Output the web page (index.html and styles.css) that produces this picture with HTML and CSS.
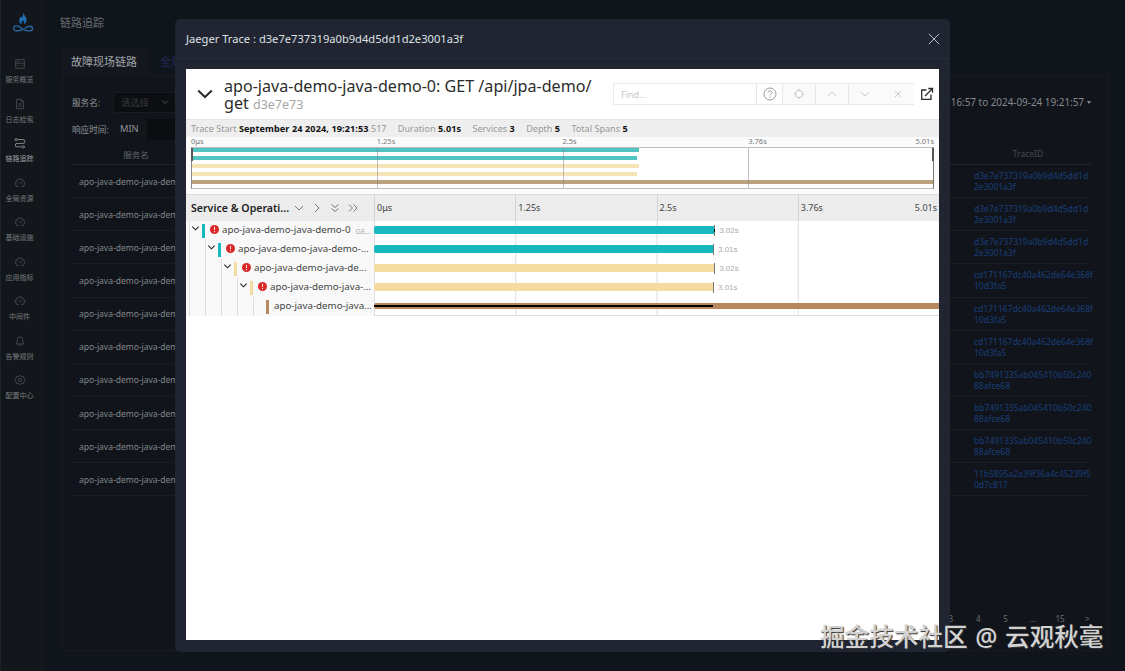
FILE: index.html
```html
<!DOCTYPE html>
<html lang="zh">
  <head>
    <meta charset="UTF-8" />
    <meta name="viewport" content="width=device-width, initial-scale=1.0" />
    <title>链路追踪</title>
    <link rel="stylesheet" href="styles.css">
  </head>
  <body>
    <div class="app">
      <nav class="sidebar">
        <svg class="logo" viewBox="0 0 22 20">
          <path d="M11 .5c.8 2.600 3.600 4.300 3.600 7.500 0 2-1.200 3.600-2.600 4.300.5-1.600 0-2.900-1.100-4-.9 1.100-1.700 2.400-1.100 4C8.200 11.600 7 10 7.200 7.900c.2-1.500 1-2.100 1.300-3.400.6.4.9.9 1 1.500C10.700 4.500 11.300 2.700 11 .5z" fill="#1f6db0" />
          <path d="M2.600 18.300a2.500 2.500 0 0 1 1.600-4.500c3 0 4.500 2 7 3.500 2 1.200 4.500 1.700 7 1.500a2.300 2.300 0 0 0 0-4.600c-3 0-4 1-5.500 2.300M2.600 18.300c3 1 6 .3 8-1" fill="none" stroke="#2a649c" stroke-width="1.400" />
        </svg>
        <div class="menu" id="menu"></div>
      </nav>

      <main class="main">
        <h1>链路追踪</h1>
        <div class="tabs">
          <div class="tab active">故障现场链路</div>
          <div class="tab">全局</div>
        </div>
        <section class="panel">
          <div class="filter">
            <label>服务名:</label>
            <div class="select">
              <span>请选择</span>
              <svg viewBox="0 0 8 8"><path d="M1 2.500l3 3 3-3" /></svg>
            </div>
            <div class="range">16:57 to 2024-09-24 19:21:57<i class="caret"></i></div>
          </div>
          <div class="filter">
            <label>响应时间:</label>
            <div class="addon">MIN</div>
            <div class="input"></div>
          </div>
          <div class="table">
            <div class="table-row table-head">
              <div class="cell-service">服务名</div>
              <div class="cell-trace">TraceID</div>
            </div>
            <div id="tableBody"></div>
          </div>
          <div class="pagination">
            <span>3</span><span>4</span><span>5</span><span>...</span><span>15</span><span>&gt;</span>
          </div>
        </section>
      </main>
    </div>

    <div class="modal">
      <header class="modal-header">
        <span class="modal-title">Jaeger Trace : d3e7e737319a0b9d4d5dd1d2e3001a3f</span>
        <svg class="close" viewBox="0 0 12 12"><path d="M.8.8l10.400 10.400M11.200.8L.8 11.200" /></svg>
      </header>

      <div class="trace">
        <div class="trace-header">
          <svg class="toggle" viewBox="0 0 16 10"><path d="M1.200 1.500L8 8l6.800-6.500" /></svg>
          <h2>apo-java-demo-java-demo-0: GET /api/jpa-demo/<br>get <small>d3e7e73</small></h2>
          <div class="search">
            <div class="find">Find...</div>
            <div class="help">
              <svg viewBox="0 0 14 14"><circle cx="7" cy="7" r="6" /><path d="M5 5.600C5 3.200 9 3.200 9 5.500c0 1.400-2 1.400-2 3M7 9.600v1.200" /></svg>
            </div>
            <div class="tool"><svg viewBox="0 0 14 14"><circle cx="7" cy="7" r="3.700" /><path d="M7 1.800v2.500M7 9.700v2.500M1.800 7h2.500M9.700 7h2.500" /></svg></div>
            <div class="tool"><svg viewBox="0 0 14 14"><path d="M3 9l4-4 4 4" /></svg></div>
            <div class="tool"><svg viewBox="0 0 14 14"><path d="M3 5l4 4 4-4" /></svg></div>
            <div class="tool last"><svg viewBox="0 0 14 14"><path d="M4 4l6 6M10 4l-6 6" /></svg></div>
          </div>
          <svg class="external" viewBox="0 0 14 14"><path d="M6.500 3H1.700v9.300H11V7.500M5 9l7.300-7.300M8.300 1.500h4.200v4.200" /></svg>
        </div>

        <div class="overview">
          <span>Trace Start <b>September 24 2024, 19:21:53</b>.517</span>
          <span>Duration <b>5.01s</b></span>
          <span>Services <b>3</b></span>
          <span>Depth <b>5</b></span>
          <span>Total Spans <b>5</b></span>
        </div>

        <div class="minimap">
          <div class="minimap-ticks">
            <span>0μs</span><span>1.25s</span><span>2.5s</span><span>3.76s</span><span class="end">5.01s</span>
          </div>
          <div class="minimap-graph">
            <div class="mini-bar teal" style="width: 60.3%"></div>
            <div class="mini-bar teal" style="width: 60.1%"></div>
            <div class="mini-bar sand" style="width: 60.3%"></div>
            <div class="mini-bar sand" style="width: 60.1%"></div>
            <div class="mini-bar brown" style="width: 100%"></div>
            <div class="minimap-grid"><i></i><i></i><i></i><i></i></div>
          </div>
        </div>

        <div class="timeline-head">
          <div class="name-head">
            <b>Service &amp; Operati...</b>
            <svg viewBox="0 0 10 10"><path d="M1 3l4 4 4-4" /></svg>
            <svg viewBox="0 0 10 10"><path d="M3 1l4 4-4 4" /></svg>
            <svg viewBox="0 0 10 10"><path d="M1.500 1.500L5 4.500l3.500-3M1.500 5.500L5 8.500l3.500-3" /></svg>
            <svg viewBox="0 0 10 10"><path d="M1 1.500L4.500 5 1 8.500M5.500 1.500L9 5 5.500 8.500" /></svg>
          </div>
          <div class="ticks">
            <span>0μs</span><span>1.25s</span><span>2.5s</span><span>3.76s<em>5.01s</em></span>
          </div>
        </div>

        <div id="spans"></div>
      </div>
    </div>

    <div class="watermark">掘金技术社区 @ 云观秋毫</div>

    <script>
      (function () {
        const gauge =
          '<path d="M3 11a5.300 5.300 0 1 1 8 0H8.500M3 11h2.500M7 8.500l2-3M3.800 7.500h.8M5 4.800l.5.5"/>';
        const menuItems = [
          ["服务概览", '<path d="M2 2h10v4H2zM2 6v6h10V6M4 4h2M4 9h2M9 9h1"/>'],
          ["日志检索", '<path d="M3 1.500h5.500L11 4v8.500H3zM8.500 1.500V4H11M5 7h4M5 9.500h4"/>'],
          ["链路追踪", '<path d="M4 3h6.500a2.200 2.200 0 0 1 0 4.500h-7a2 2 0 0 0 0 4H9"/><circle cx="2.500" cy="3" r="1.300"/><circle cx="11" cy="11.500" r="1.300"/>'],
          ["全局资源", gauge],
          ["基础设施", gauge],
          ["应用指标", gauge],
          ["中间件", gauge],
          ["告警规则", '<path d="M2.500 10.500h9L10.300 9V5.500a3.300 3.300 0 0 0-6.600 0V9zM6 12.300h2"/>'],
          ["配置中心", '<path d="M7 1.500l1.700 1.300 2.200.2.800 2L13 7l-1.300 2-.8 2-2.200.2L7 12.500l-1.700-1.300-2.200-.2-.8-2L1 7l1.300-2 .8-2 2.200-.2z"/><circle cx="7" cy="7" r="1.800"/>'],
        ];
        document.getElementById("menu").innerHTML = menuItems
          .map(
            ([name, icon], i) =>
              `<div class="menu-item${i === 2 ? " active" : ""}"><svg viewBox="0 0 14 14">${icon}</svg><span>${name}</span></div>`
          )
          .join("");

        const traceIds = [
          ["d3e7e737319a0b9d4d5dd1d", "2e3001a3f"],
          ["d3e7e737319a0b9d4d5dd1d", "2e3001a3f"],
          ["d3e7e737319a0b9d4d5dd1d", "2e3001a3f"],
          ["cd171167dc40a462de64e368f", "10d3fa5"],
          ["cd171167dc40a462de64e368f", "10d3fa5"],
          ["cd171167dc40a462de64e368f", "10d3fa5"],
          ["bb7491335ab045410b50c240", "88afce68"],
          ["bb7491335ab045410b50c240", "88afce68"],
          ["bb7491335ab045410b50c240", "88afce68"],
          ["11b5895a2a39f36a4c45239f5", "0d7c817"],
        ];
        document.getElementById("tableBody").innerHTML = traceIds
          .map(
            (id) =>
              `<div class="table-row"><div class="cell-service">apo-java-demo-java-dem</div><div class="cell-trace">${id.join("<br>")}</div></div>`
          )
          .join("");

        // width is the share of the whole 5.01s trace
        const spans = [
          { name: "apo-java-demo-java-demo-0", op: "GE...", color: "teal", width: 60.2, label: "3.02s" },
          { name: "apo-java-demo-java-demo-...", color: "teal", width: 60, label: "3.01s" },
          { name: "apo-java-demo-java-de...", color: "sand", width: 60.2, label: "3.02s" },
          { name: "apo-java-demo-java-...", color: "sand", width: 60, label: "3.01s" },
          { name: "apo-java-demo-java...", color: "brown", width: 100 },
        ];
        document.getElementById("spans").innerHTML = spans
          .map((span, depth) => {
            const guides = '<i class="guide"></i>'.repeat(depth);
            const leaf = depth === spans.length - 1;
            const chevron = leaf
              ? ""
              : '<svg class="chevron" viewBox="0 0 10 10"><path d="M1.500 3L5 6.500 8.500 3"/></svg>';
            const error = leaf
              ? ""
              : '<svg class="error" viewBox="0 0 10 10"><circle cx="5" cy="5" r="5"/><path d="M5 2v3.600M5 6.700v1.300"/></svg>';
            return `<div class="span-row">
              <div class="span-name">${guides}<i class="guide lead">${chevron}</i><i class="mark ${span.color}"></i>${error}<span>${span.name}</span>${span.op ? `<small>${span.op}</small>` : ""}</div>
              <div class="span-view">
                <div class="bar ${span.color}" style="width: ${span.width}%">${leaf ? '<i class="critical"></i>' : ""}</div>
                ${leaf ? "" : `<i class="bar-end"></i><span class="bar-label">${span.label}</span>`}
              </div>
            </div>`;
          })
          .join("");
      })();
    </script>
  </body>
</html>
```
FILE: styles.css
```css
* {
  box-sizing: border-box;
}

body {
  margin: 0;
  height: 671px;
  overflow: hidden;
  position: relative;
  background: #10141b;
  font-family: "Noto Sans", "Noto Sans CJK SC", sans-serif;
}

svg {
  display: block;
  flex: none;
  fill: none;
  stroke: currentColor;
}

i,
em {
  font-style: normal;
}

.app {
  display: flex;
  height: 671px;
}

.sidebar {
  width: 45px;
  flex: none;
  background: #13171b;
  border-left: 1px solid #1d2226;
}

.logo {
  width: 22px;
  height: 20px;
  margin: 12px 0 0 11px;
  stroke: none;
}

.menu {
  margin-top: 24px;
  width: 37px;
}

.menu-item {
  height: 39.55px;
  display: flex;
  flex-direction: column;
  align-items: center;
  color: #505459;
}

.menu-item svg {
  width: 12px;
  height: 12px;
  margin-top: 2px;
  stroke-width: 0.9;
}

.menu-item span {
  font-size: 7px;
  line-height: 10px;
  margin-top: 5px;
  color: #777a7e;
}

.menu-item.active {
  color: #a0a2a5;
}

.menu-item.active span {
  color: #9b9ea2;
}

.main {
  flex: 1;
  padding: 12px 16px 0 17px;
}

h1 {
  margin: 0 0 14px -2px;
  font-size: 11px;
  line-height: 21px;
  font-weight: 400;
  color: #686c72;
}

.tabs {
  display: flex;
  height: 28px;
}

.tab {
  padding: 0 11px;
  font-size: 11px;
  line-height: 29px;
  color: #27265b;
}

.tab.active {
  width: 87px;
  padding: 0 9px;
  white-space: nowrap;
  color: #a2a5a9;
  background: #14181e;
  border-radius: 4px 4px 0 0;
}

.panel {
  height: 576px;
  padding: 15px 17px 0 9px;
  border: 1px solid #171b21;
  background: #11151b;
  display: flex;
  flex-direction: column;
}

.filter {
  display: flex;
  align-items: center;
  height: 22px;
  margin-bottom: 5px;
  font-size: 8.6px;
  color: #909398;
}

.filter label {
  width: 41px;
  white-space: nowrap;
}

.select {
  width: 64px;
  height: 21px;
  padding: 0 7px;
  display: flex;
  align-items: center;
  justify-content: space-between;
  background: #0c0e11;
  border: 1px solid #191c20;
  border-radius: 3px;
  font-size: 9.3px;
  color: #36393d;
}

.select svg {
  width: 8px;
  height: 8px;
  color: #54575b;
}

.range {
  margin-left: auto;
  display: flex;
  align-items: center;
  font-size: 9.9px;
  color: #85898e;
}

.caret {
  margin-left: 3px;
  border: 2.5px solid transparent;
  border-top: 3px solid #85898e;
  border-bottom: 0;
}

.addon {
  width: 34px;
  padding-left: 7px;
  font-size: 9.3px;
  line-height: 20px;
  background: #12161a;
}

.input {
  width: 60px;
  height: 21px;
  background: #0b0d10;
}

.table-row {
  height: 33.15px;
  display: flex;
  align-items: center;
  justify-content: space-between;
  border-bottom: 1px solid #191d22;
  font-size: 8.5px;
}

.table-head {
  height: 22px;
  margin-top: -2px;
  text-align: center;
  color: #5b5f65;
  border-color: #21252b;
}

.cell-service {
  width: 128px;
  padding-left: 7px;
  color: #81858a;
  white-space: nowrap;
}

.table-head .cell-service {
  padding: 0;
  color: #60646a;
}

.cell-trace {
  width: 128px;
  padding-left: 11px;
  line-height: 11px;
  color: #193d79;
}

.table-head .cell-trace {
  padding: 0 0 0 2px;
  color: #44484d;
}

.pagination {
  margin: auto -10px 24px 0;
  display: flex;
  justify-content: flex-end;
  font-size: 8px;
  line-height: 14px;
  color: #6b6e73;
}

.pagination span {
  width: 27.3px;
  text-align: center;
}

/* dialog over the page */
.modal {
  position: absolute;
  left: 175px;
  top: 19px;
  width: 775px;
  height: 633px;
  padding: 0 11px;
  background: #202531;
  border-radius: 5px;
}

.modal-header {
  height: 40px;
  margin: 0 -11px 10px;
  padding: 0 10px 0 11px;
  display: flex;
  align-items: center;
  justify-content: space-between;
  border-bottom: 1px solid #272c38;
  color: #dfe1e5;
}

.modal-title {
  font-size: 11.15px;
  margin-top: -1px;
}

.close {
  width: 12px;
  height: 12px;
  color: #bcc0c6;
}

.trace {
  height: 571px;
  background: #fff;
  overflow: hidden;
  color: #2b2b2b;
}

.trace-header {
  height: 51px;
  display: flex;
  align-items: flex-start;
  border-bottom: 1px solid #e4e4e4;
}

.toggle {
  width: 16px;
  height: 10px;
  margin: 20px 11px 0;
  stroke-width: 2;
}

h2 {
  width: 389px;
  margin: 9px 0 0;
  font-size: 16.1px;
  line-height: 17px;
  font-weight: 400;
  white-space: nowrap;
}

h2 small {
  font-size: 12.5px;
  color: #a6a6a6;
}

.search {
  display: flex;
  width: 301px;
  height: 22px;
  margin-top: 14px;
  border: 1px solid #eaeaea;
  border-right: 0;
}

.find {
  width: 142px;
  padding-left: 7px;
  font-size: 9px;
  line-height: 21px;
  color: #c6c6c6;
}

.help,
.tool {
  display: flex;
  align-items: center;
  justify-content: center;
  border-left: 1px solid #e6e6e6;
}

.help {
  width: 26px;
  color: #999;
}

.tool {
  width: 33px;
  background: #fafafa;
  color: #c8c8c8;
}

.tool.last {
  border-left: 0;
}

.search svg {
  width: 14px;
  height: 14px;
}

.external {
  width: 14px;
  height: 14px;
  margin: 18px 0 0 6px;
  stroke-width: 1.3;
}

.overview {
  height: 17px;
  padding-left: 5px;
  display: flex;
  gap: 11.3px;
  background: #eee;
  font-size: 9.1px;
  line-height: 18px;
  color: #999;
  white-space: nowrap;
}

.overview b {
  color: #111;
  letter-spacing: 0.1px;
}

.minimap {
  height: 57px;
  padding: 0 5px;
  background: #fbfbfb;
}

.minimap-ticks {
  height: 10px;
  display: grid;
  grid-template-columns: 1fr 1fr 1fr 1fr 0;
  font-size: 7.5px;
  line-height: 8px;
  color: #777;
}

.minimap-ticks .end {
  justify-self: end;
}

.minimap-graph {
  position: relative;
  height: 42px;
  border: 1px solid #bbb;
  border-left-color: #888;
  border-right-color: #777;
  background: #fff;
}

.mini-bar {
  height: 4px;
  margin-bottom: 4px;
}

.mini-bar.teal {
  background: #51c3c1;
}

.mini-bar.sand {
  background: #f6e3b7;
}

.mini-bar.brown {
  background: #bca180;
}

/* grid lines and scrubber handles lie over the bars */
.minimap-grid {
  position: absolute;
  inset: 0;
  display: grid;
  grid-template-columns: repeat(4, 1fr);
}

.minimap-grid i {
  border-left: 1px solid rgba(120, 120, 120, 0.45);
}

.minimap-grid i:first-child {
  border: 0;
}

.minimap-grid::before,
.minimap-grid::after {
  content: "";
  position: absolute;
  top: 0;
  left: -1px;
  width: 2px;
  height: 13px;
  background: #575757;
}

.minimap-grid::after {
  left: auto;
  right: -1px;
}

.timeline-head {
  height: 27px;
  display: flex;
  background: #ececec;
  border-top: 1px solid #ddd;
}

.name-head {
  width: 188px;
  padding-left: 5px;
  display: flex;
  align-items: center;
  color: #777;
}

.name-head b {
  width: 103px;
  font-size: 10.6px;
  color: #222;
  font-weight: 600;
  white-space: nowrap;
}

.name-head svg {
  width: 10px;
  height: 10px;
  margin-right: 8px;
}

.ticks {
  flex: 1;
  display: grid;
  grid-template-columns: repeat(4, 1fr);
  font-size: 9px;
  line-height: 26px;
  color: #444;
}

.ticks span {
  display: flex;
  justify-content: space-between;
  padding: 0 2px;
  border-left: 1px solid #d3d3d3;
}

.span-row {
  height: 19px;
  display: flex;
}

.span-name {
  width: 188px;
  padding-left: 3px;
  display: flex;
  align-items: center;
  background: #f8f8f8;
  font-size: 9.75px;
  line-height: 18px;
  color: #444;
  white-space: nowrap;
  overflow: hidden;
}

.span-name span {
  margin-top: -1px;
}

.guide {
  width: 16px;
  height: 19px;
  flex: none;
  border-left: 1px solid #ddd;
}

.guide.lead {
  width: 13px;
}

.chevron {
  width: 9px;
  height: 9px;
  margin: 3px 0 0 1px;
  color: #222;
  stroke-width: 1.2;
}

.mark {
  width: 3px;
  height: 14px;
  flex: none;
  margin-right: 5px;
}

.error {
  width: 9px;
  height: 9px;
  margin: -2px 3px 0 0;
  fill: #db2828;
  stroke: none;
}

.error path {
  stroke: #fff;
}

.span-name small {
  margin-left: 5px;
  font-size: 7.5px;
  color: #aaa;
}

.teal {
  background: #17b8be;
}

.sand {
  background: #f3dba2;
}

.brown {
  background: #b7885e;
}

.span-view {
  flex: 1;
  display: flex;
  align-items: center;
  padding-bottom: 1px;
  background: linear-gradient(90deg, #ddd 1px, transparent 1px) 0 0 / 25% 100%;
}

.bar {
  height: 8px;
  display: flex;
  align-items: center;
  border-radius: 2px 0 0 2px;
}

.brown.bar {
  height: 6px;
}

.bar-end {
  width: 1px;
  height: 11px;
  background: #777;
}

.span-row:first-child .bar-end {
  background: linear-gradient(#777 4px, #000 4px, #000 7px, #777 7px);
}

.bar-label {
  margin-left: 4px;
  font-family: "Liberation Sans", sans-serif;
  font-size: 8px;
  color: #aaa;
}

.critical {
  width: 60%;
  height: 2px;
  background: #000;
}

.span-row:last-child .span-view {
  padding-bottom: 0;
  border-bottom: 1px solid #ddd;
}

.watermark {
  position: absolute;
  left: 820px;
  top: 624px;
  font-size: 24.6px;
  line-height: 26px;
  font-weight: 500;
  word-spacing: 1.3px;
  white-space: nowrap;
  color: #d2d2d2;
  text-shadow: 1px 1px 1px #333;
}
```
